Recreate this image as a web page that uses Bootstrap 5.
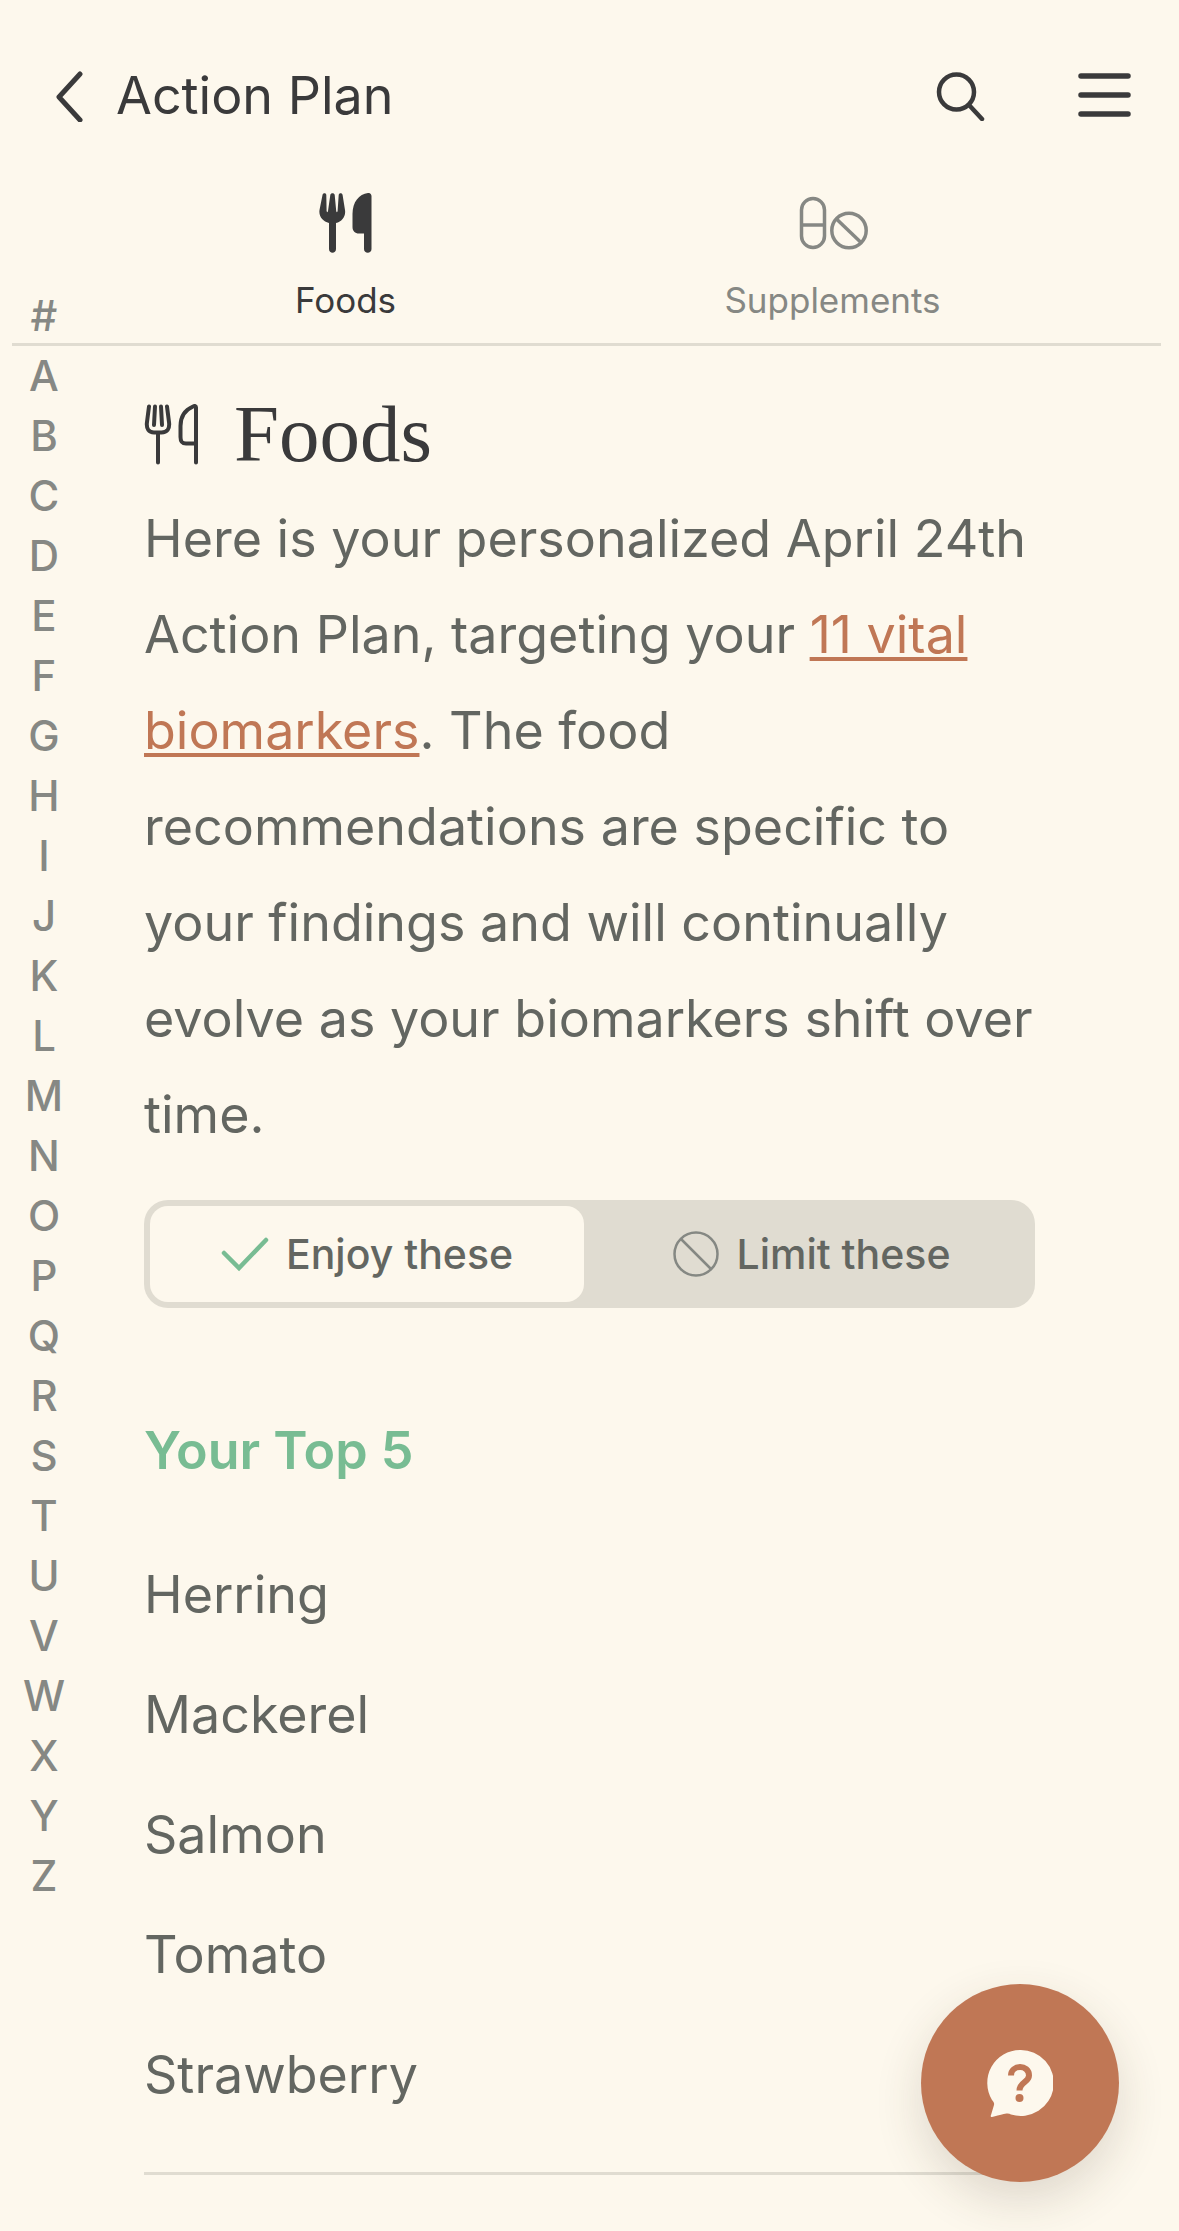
<!DOCTYPE html>
<html lang="en">
<head>
<meta charset="utf-8">
<meta name="viewport" content="width=device-width, initial-scale=1">
<title>Action Plan</title>
<link rel="stylesheet" href="https://cdn.jsdelivr.net/npm/bootstrap@5.3.0/dist/css/bootstrap.min.css">
<style>
  :root { --paper: #fdf8ed; --ink: #3a3a3b; --body-ink: #636661; --muted: #868884; --line: #e0dcd1; --clay: #c07755; --leaf: #78bc93; }
  body { background: var(--paper); color: var(--body-ink); font-family: Inter, "Liberation Sans", sans-serif; font-size: 52px; line-height: 96px; }
  svg { display: block; flex: none; }
  .plain-btn { background: none; border: 0; padding: 0; color: var(--ink); }
  .top-bar { padding: 48px 48px 48px 56px; color: var(--ink); }
  .page-title { font-size: 52px; line-height: 96px; font-weight: 400; }
  .back-link { color: var(--ink); gap: 33px; }
  .top-actions { gap: 92px; }
  .section-tabs { margin: 0 18px 0 12px; padding: 0 85px 19px 90px; border-bottom: 3px solid var(--line); }
  .section-tabs .nav-link { padding: 0; gap: 23px; font-size: 35px; line-height: 48px; color: var(--muted); }
  .section-tabs .nav-link.active { color: var(--ink); }
  .letter-index { width: 88px; margin-top: -60px; font-size: 42px; line-height: 60px; font-weight: 500; }
  .letter-index a { color: var(--muted); text-decoration: none; }
  .plan { padding: 40px 144px 0 56px; min-width: 0; }
  .plan-title { font-family: "Liberation Serif", serif; font-size: 81px; line-height: 96px; font-weight: 400; color: var(--ink); gap: 36px; margin-bottom: 9px; }
  .intro { margin-bottom: 37px; }
  .intro a { color: var(--clay); text-decoration-thickness: 4px; text-underline-offset: 4px; }
  .choice { background: var(--line); border-radius: 24px; padding: 6px; gap: 11px; margin-bottom: 95px; }
  .choice .btn { border: 0; border-radius: 18px; padding: 18px 0; font-size: 41px; line-height: 60px; font-weight: 500; color: var(--body-ink); gap: 17px; }
  .choice .btn.active { background: var(--paper); color: var(--body-ink); }
  .top-five { font-size: 52px; line-height: 96px; font-weight: 600; color: var(--leaf); margin-bottom: 36px; }
  .food-list { line-height: 120px; padding-bottom: 37px; border-bottom: 3px solid var(--line); }
  .help-fab { right: 60px; bottom: 49px; width: 198px; height: 198px; background: var(--clay); box-shadow: 0 18px 48px rgba(60, 50, 30, .16); }
</style>
<script defer src="https://cdn.jsdelivr.net/npm/bootstrap@5.3.0/dist/js/bootstrap.bundle.min.js"></script>
</head>
<body>
<header>
  <div class="top-bar d-flex align-items-center justify-content-between">
    <a class="back-link d-flex align-items-center text-decoration-none" href="#">
      <svg width="27" height="52" viewBox="0 0 27 52" fill="none" stroke="currentColor" stroke-width="5" stroke-linecap="round" stroke-linejoin="round"><path d="M24 4 3 27 24 50"/></svg>
      <h1 class="page-title mb-0">Action Plan</h1>
    </a>
    <div class="top-actions d-flex align-items-center">
      <button class="plain-btn" type="button" aria-label="Search">
        <svg width="50" height="50" viewBox="0 0 50 50" fill="none" stroke="currentColor" stroke-width="4.500" stroke-linecap="round"><circle cx="20.500" cy="21" r="17.500"/><path d="M33 34 46 48"/></svg>
      </button>
      <button class="plain-btn" type="button" aria-label="Menu">
        <svg width="53" height="46" viewBox="0 0 53 46" fill="none" stroke="currentColor" stroke-width="5.500" stroke-linecap="round"><path d="M3 3H50M3 22H50M3 41H50"/></svg>
      </button>
    </div>
  </div>
  <nav class="section-tabs nav nav-justified">
    <a class="nav-link active d-flex flex-column align-items-center" href="#foods" aria-current="page">
      <svg width="54" height="61" viewBox="1 0 54 61" fill="currentColor"><path d="M4.500 3C4.800 .5 8.300.5 8.300 3L8.600 19C8.800 20.500 9.800 20.500 10 19L12.300 3C12.600.5 16.400.5 16.700 3L18.200 19C18.400 20.500 19.400 20.500 19.600 19L20.700 3C20.900.5 24.300.5 24.600 3L27 18C28 24.500 24 29.500 18 31V57C18 62 11 62 11 57V31C5 29.500.500 24.500 1.500 18Z"/><path d="M50 1C52 .5 53.500 2 53.500 4V57C53.500 62 46 62 46 57V41.500H41C37 41.500 34.500 39 34.500 35V22C34.500 10 41 2 50 1Z"/></svg>
      <span>Foods</span>
    </a>
    <a class="nav-link d-flex flex-column align-items-center" href="#supplements">
      <svg width="70" height="61" viewBox="-1 0 70 61" fill="none" stroke="currentColor" stroke-width="3.500"><rect x="2.500" y="6.500" width="23" height="49" rx="11.500"/><path d="M2.500 33H25.500"/><circle cx="50" cy="38.500" r="17.200"/><path d="M38 27.500 62 50.500"/></svg>
      <span>Supplements</span>
    </a>
  </nav>
</header>
<div class="d-flex align-items-start">
  <nav class="letter-index d-flex flex-column flex-shrink-0 text-center" aria-label="Foods by letter">
    <a href="#">#</a><a href="#">A</a><a href="#">B</a><a href="#">C</a><a href="#">D</a><a href="#">E</a><a href="#">F</a><a href="#">G</a><a href="#">H</a><a href="#">I</a><a href="#">J</a><a href="#">K</a><a href="#">L</a><a href="#">M</a><a href="#">N</a><a href="#">O</a><a href="#">P</a><a href="#">Q</a><a href="#">R</a><a href="#">S</a><a href="#">T</a><a href="#">U</a><a href="#">V</a><a href="#">W</a><a href="#">X</a><a href="#">Y</a><a href="#">Z</a>
  </nav>
  <main class="plan flex-grow-1" id="foods">
    <h2 class="plan-title d-flex align-items-center">
      <svg width="54" height="61" viewBox="0 0 54 61" fill="none" stroke="currentColor" stroke-width="4" stroke-linecap="round" stroke-linejoin="round"><path d="M5 2.500 3 18C2 25 5 28.500 10 28.500H17.500C23 28.500 26 25 25 18L23 2.500M11 2.500 10 21M17 2.500 18 21M14 29V58.500M52 58.500V3.500C52 2 51 1.500 49 2.500 41 6 36.500 12 36.500 22V33C36.500 38 38 39.500 42 39.500H52"/></svg>
      <span>Foods</span>
    </h2>
    <p class="intro">Here is your personalized April 24th Action Plan, targeting your <a href="#">11 vital biomarkers</a>. The food recommendations are specific to your findings and will continually evolve as your biomarkers shift over time.</p>
    <div class="choice d-flex" role="group" aria-label="Food list">
      <button class="btn active d-flex align-items-center justify-content-center w-50" type="button" aria-pressed="true">
        <svg width="48" height="46" viewBox="0 0 48 46" fill="none" stroke="#78bc93" stroke-width="4.500" stroke-linecap="round"><path d="M3 22 18 37 45 9"/></svg>
        <span>Enjoy these</span>
      </button>
      <button class="btn d-flex align-items-center justify-content-center w-50" type="button" aria-pressed="false">
        <svg width="46" height="46" viewBox="0 0 46 46" fill="none" stroke="#858883" stroke-width="2.500"><circle cx="23" cy="23" r="21.500"/><path d="M8 8 38 38"/></svg>
        <span>Limit these</span>
      </button>
    </div>
    <h3 class="top-five">Your Top 5</h3>
    <ul class="food-list list-unstyled mb-0">
      <li>Herring</li>
      <li>Mackerel</li>
      <li>Salmon</li>
      <li>Tomato</li>
      <li>Strawberry</li>
    </ul>
  </main>
</div>
<button class="help-fab btn rounded-circle border-0 position-fixed d-flex align-items-center justify-content-center p-0" type="button" aria-label="Help">
  <svg width="66" height="68" viewBox="0 0 66 68"><path fill="#fdf8ed" d="M33 1A33 33 0 1 1 24 65.500C21 63.500 18 64.500 5 68C3.500 68 3.500 67 4 66L7 56C7.500 54 6.500 53 5 51A33 33 0 0 1 33 1Z"/><path d="M24 26.500C24 15.500 42 15 42 26.500C42 33.500 32.500 33 32.500 41.500" fill="none" stroke="#c07755" stroke-width="6"/><circle cx="32.500" cy="49" r="4" fill="#c07755"/></svg>
</button>
</body>
</html>
